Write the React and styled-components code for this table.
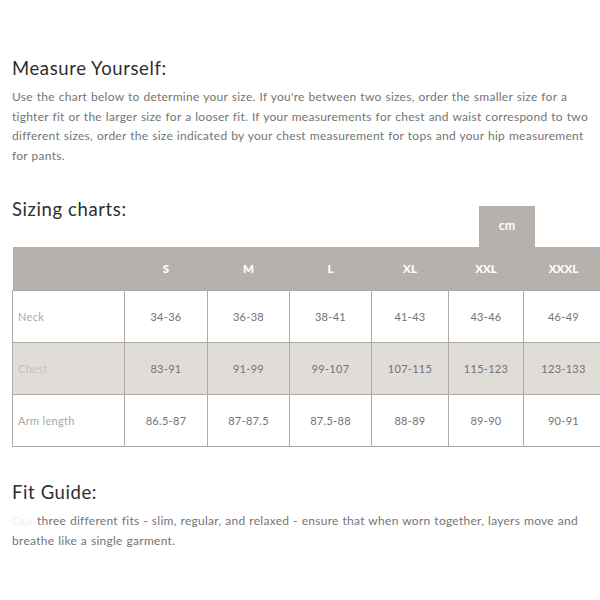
import React from 'react';
import styled, { createGlobalStyle } from 'styled-components';

const sizes = ['S', 'M', 'L', 'XL', 'XXL', 'XXXL'];
const widths = [112, 83, 82, 82, 77, 75, 80];

const rows = [
  { label: 'Neck', values: ['34-36', '36-38', '38-41', '41-43', '43-46', '46-49'] },
  { label: 'Chest', shaded: true, values: ['83-91', '91-99', '99-107', '107-115', '115-123', '123-133'] },
  { label: 'Arm length', values: ['86.5-87', '87-87.5', '87.5-88', '88-89', '89-90', '90-91'] },
];

function App() {
  return (
    <>
      <GlobalStyle />
      <Page>
        <Heading>Measure Yourself:</Heading>
        <Text>
          <Line>Use the chart below to determine your size. If you're between two sizes, order the smaller size for a</Line>
          <Line>tighter fit or the larger size for a looser fit. If your measurements for chest and waist correspond to two</Line>
          <Line>different sizes, order the size indicated by your chest measurement for tops and your hip measurement</Line>
          <Line>for pants.</Line>
        </Text>

        <ChartHead>
          <Heading>Sizing charts:</Heading>
          <UnitTab>cm</UnitTab>
        </ChartHead>

        <Table>
          <colgroup>
            {widths.map((w, i) => (
              <col key={i} style={{ width: w }} />
            ))}
          </colgroup>
          <thead>
            <tr>
              <HeadCell />
              {sizes.map((s) => (
                <HeadCell key={s}>{s}</HeadCell>
              ))}
            </tr>
          </thead>
          <tbody>
            {rows.map((r) => (
              <Row key={r.label} $shaded={r.shaded}>
                <LabelCell $shaded={r.shaded}>{r.label}</LabelCell>
                {r.values.map((v, i) => (
                  <Cell key={i}>{v}</Cell>
                ))}
              </Row>
            ))}
          </tbody>
        </Table>

        <FitHeading>Fit Guide:</FitHeading>
        <Text>
          <Line>
            <Faded>Our</Faded> three different fits - slim, regular, and relaxed - ensure that when worn together, layers move and
          </Line>
          <Line>breathe like a single garment.</Line>
        </Text>
      </Page>
    </>
  );
}

export default App;

const GlobalStyle = createGlobalStyle`
  html, body {
    margin: 0;
    padding: 0;
    background: #fff;
    overflow: hidden;
  }
`;

const Page = styled.div`
  width: 600px;
  height: 600px;
  padding: 56px 0 0 12px;
  box-sizing: border-box;
  font-family: Lato, 'Open Sans', sans-serif;
  overflow: hidden;
`;

const Heading = styled.h2`
  margin: 0;
  font-size: 18.5px;
  line-height: 24px;
  font-weight: 400;
  color: #2e2e2e;
  letter-spacing: 0.6px;
`;

const Text = styled.p`
  margin: 7px 0 0;
  font-size: 12px;
  line-height: 19.5px;
  color: #747474;
  letter-spacing: 0.27px;
  word-spacing: 0.5px;
`;

const Line = styled.span`
  display: block;
  white-space: nowrap;
`;

const Faded = styled.span`
  color: #f1f1f1;
`;

const ChartHead = styled.div`
  display: flex;
  align-items: flex-start;
  height: 50px;
  margin-top: 32px;
`;

const UnitTab = styled.div`
  align-self: flex-end;
  margin-left: auto;
  margin-right: 65px;
  width: 56px;
  height: 41px;
  display: flex;
  align-items: center;
  justify-content: center;
  padding-bottom: 2px;
  box-sizing: border-box;
  background: #b6b1ad;
  color: #fff;
  font-weight: 700;
  font-size: 12.5px;
`;

const Table = styled.table`
  width: 591px;
  border-collapse: collapse;
  table-layout: fixed;
`;

const HeadCell = styled.th`
  height: 43px;
  padding: 0;
  background: #b6b1ad;
  color: #fff;
  font-size: 11.5px;
  font-weight: 900;
  text-align: center;
`;

const Row = styled.tr`
  background: ${(p) => (p.$shaded ? '#e0ddd9' : '#fff')};
`;

const Cell = styled.td`
  height: 51px;
  padding: 0;
  border: 1px solid #aeaaa6;
  text-align: center;
  font-size: 11px;
  color: #737373;
  letter-spacing: 0.3px;
`;

const LabelCell = styled(Cell)`
  text-align: left;
  padding-left: 5px;
  color: ${(p) => (p.$shaded ? '#c4c1bd' : '#a8a8a8')};
`;

const FitHeading = styled(Heading)`
  margin-top: 33px;
`;
